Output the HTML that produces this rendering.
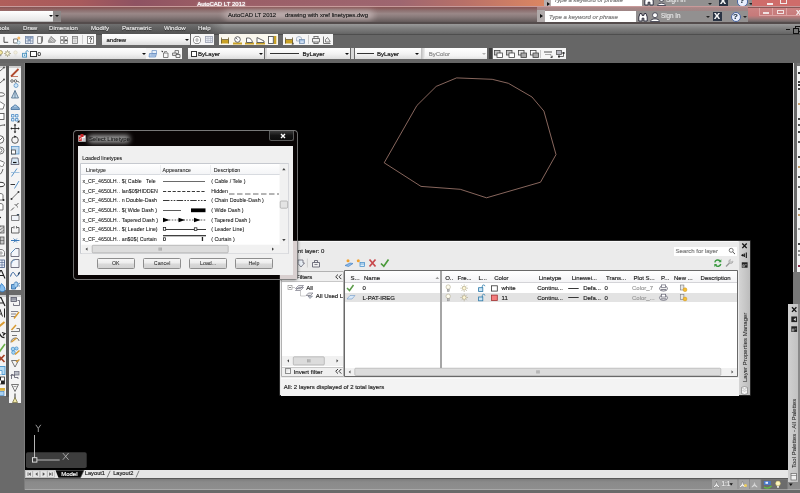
<!DOCTYPE html>
<html><head><meta charset="utf-8"><title>AutoCAD LT 2012</title>
<style>
html,body{margin:0;padding:0;}
body{width:800px;height:493px;overflow:hidden;position:relative;background:#666;font-family:"Liberation Sans",sans-serif;font-size:7px;color:#222;}
.a{position:absolute;}
.t{position:absolute;white-space:nowrap;line-height:1;-webkit-text-stroke:.16px;}
.blur{filter:blur(0.4px);}
#dlg .t{-webkit-text-stroke:.06px;}
#all{position:absolute;left:0;top:0;width:800px;height:493px;overflow:hidden;filter:blur(0.45px);will-change:transform;}
</style></head><body>
<div id="all">
<!-- TITLE -->
<div class="a" style="left:0;top:0;width:800px;height:7px;background:linear-gradient(90deg,#b05e5a 0,#a85a5c 10%,#8e5262 17%,#9a5c64 25%,#9e6670 50%,#b87068 58%,#dc8662 68%);"></div>
<div class="a" style="left:0;top:6.200px;width:800px;height:1px;background:#c89a9a;"></div>
<div class="a" style="left:0;top:7.200px;width:800px;height:15.800px;background:linear-gradient(180deg,#865454 0,#8a5e5e 10%,#8c6e6e 20%,#9a8888 42%,#887a7a 62%,#685e5e 90%,#5a5252 100%);"></div>
<div class="a" style="left:0;top:8px;width:60px;height:15px;background:linear-gradient(90deg,rgba(176,90,86,.35),rgba(176,90,86,0));"></div>
<div class="a" style="left:537px;top:7.200px;width:211px;height:4px;background:linear-gradient(180deg,rgba(205,180,180,.55),rgba(170,150,150,.5));"></div>
<!-- top-row (behind window) -->
<div class="t" style="left:197.200px;top:.8px;font-size:6px;color:#fff;text-shadow:0 0 2px #fff;">AutoCAD LT 2012</div>
<div class="a" style="left:544px;top:0;width:7px;height:6px;background:#b8b0b0;"></div>
<div class="a" style="left:547px;top:2px;border-left:3px solid #111;border-top:2px solid transparent;border-bottom:2px solid transparent;"></div>
<div class="a" style="left:551px;top:0;width:91px;height:6px;background:#fff;overflow:hidden;"><div class="t" style="left:3px;top:-3px;font-size:6px;font-style:italic;color:#777;">Type a keyword or phrase</div></div>
<div class="a" style="left:642px;top:0;width:110px;height:6.300px;background:#929090;overflow:hidden;">
  <div class="t" style="left:24px;top:-3px;font-size:6.3px;color:#e4e4e4;">Sign In</div>
  <svg class="a" style="left:2px;top:-4px" width="10" height="10" viewBox="0 0 10 10"><path d="M.8 9V5L2 1.500h1.600l.6 2h1.600l.6-2H8L9.200 5v4H5.900V6.200H4.100V9z" fill="#fff" stroke="#223" stroke-width=".9"/></svg>
  <svg class="a" style="left:15px;top:-4px" width="9" height="10" viewBox="0 0 9 10"><circle cx="4.5" cy="3" r="2.4" fill="#fff" stroke="#334" stroke-width=".8"/><path d="M.5 9.500c0-3 8-3 8 0z" fill="#fff" stroke="#334" stroke-width=".8"/></svg>
  <div class="a" style="left:77px;top:-3px;width:9px;height:9px;background:#2a3444;"></div><div class="t" style="left:78px;top:-3px;font-size:9px;color:#fff;font-weight:bold;">X</div>
  <div class="a" style="left:95px;top:-4px;width:9px;height:9px;border-radius:5px;background:#e8eefc;border:1px solid #4a66a0;"></div><div class="t" style="left:97.500px;top:-3px;font-size:8px;color:#234;font-weight:bold;">?</div>
  <div class="a" style="left:66px;top:3px;border-top:2px solid #222;border-left:2px solid transparent;border-right:2px solid transparent;"></div>
  <div class="a" style="left:107px;top:3px;border-top:2px solid #222;border-left:2px solid transparent;border-right:2px solid transparent;"></div>
</div>
<div class="a" style="left:752px;top:0;width:48px;height:6.300px;background:#cf6c6a;"></div>
<div class="a" style="left:767px;top:3px;width:6px;height:2px;background:#f4eaea;"></div>
<div class="a" style="left:780px;top:0px;width:5px;height:3px;border:1px solid #f4eaea;border-top:0;"></div>
<!-- main title row -->
<div class="a" style="left:0;top:11px;width:53px;height:11px;background:linear-gradient(180deg,#fff,#e6e6e6);border-bottom:1px solid #bbb;box-sizing:border-box;"></div>
<div class="a" style="left:49px;top:15px;border-top:2.500px solid #111;border-left:2px solid transparent;border-right:2px solid transparent;"></div>
<div class="a" style="left:53px;top:11px;width:8px;height:11px;background:#8c8888;"></div>
<div class="a" style="left:55px;top:15px;border-top:2.500px solid #111;border-left:2px solid transparent;border-right:2px solid transparent;"></div>
<div class="a" style="left:224px;top:11px;width:150px;height:8px;background:#c4b4b4;border-radius:4px;filter:blur(3px);opacity:.95;"></div>
<div class="t" style="left:228px;top:12px;font-size:6px;color:#1c1c1c;">AutoCAD LT 2012</div>
<div class="t" style="left:285px;top:12px;font-size:6px;color:#1c1c1c;">drawing with xref linetypes.dwg</div>
<div class="a" style="left:537px;top:10px;width:8px;height:12px;background:#b0aaaa;"></div>
<div class="a" style="left:540px;top:14px;border-left:3px solid #111;border-top:2.500px solid transparent;border-bottom:2.500px solid transparent;"></div>
<div class="a" style="left:545px;top:11px;width:91px;height:11px;background:#fff;"><div class="t" style="left:4px;top:2.500px;font-size:6px;font-style:italic;color:#777;">Type a keyword or phrase</div></div>
<div class="a" style="left:636px;top:11px;width:112px;height:11px;background:#929090;">
  <svg class="a" style="left:2px;top:1px" width="10" height="10" viewBox="0 0 10 10"><path d="M.8 9V5L2 1.500h1.600l.6 2h1.600l.6-2H8L9.200 5v4H5.900V6.200H4.100V9z" fill="#fff" stroke="#223" stroke-width=".9"/></svg>
  <svg class="a" style="left:14px;top:1px" width="10" height="10" viewBox="0 0 10 10"><circle cx="5" cy="3.200" r="2.500" fill="#fff" stroke="#334" stroke-width=".8"/><path d="M.5 9.500c0-3.500 9-3.500 9 0z" fill="#fff" stroke="#334" stroke-width=".8"/></svg>
  <div class="t" style="left:25px;top:2px;font-size:6.3px;color:#e2e2e2;">Sign In</div>
  <div class="a" style="left:70px;top:5px;border-top:2px solid #222;border-left:2px solid transparent;border-right:2px solid transparent;"></div>
  <div class="a" style="left:77px;top:1px;width:9px;height:9px;background:#2a3444;"></div><div class="t" style="left:78px;top:1px;font-size:9px;color:#fff;font-weight:bold;">X</div>
  <div class="a" style="left:95px;top:1px;width:8px;height:8px;border-radius:5px;background:#e8eefc;border:1px solid #4a66a0;"></div><div class="t" style="left:97px;top:2px;font-size:8px;color:#234;font-weight:bold;">?</div>
  <div class="a" style="left:107px;top:5px;border-top:2px solid #222;border-left:2px solid transparent;border-right:2px solid transparent;"></div>
</div>
<div class="a" style="left:748px;top:8px;width:52px;height:14px;background:linear-gradient(180deg,#cc8282 0,#c67a7a 55%,#a47a7a 72%,#7e6e6e 90%,#6a6060 100%);"></div>
<div class="a" style="left:759px;top:8px;width:14px;height:8px;border:.7px solid #dca4a4;border-top:0;box-sizing:border-box;"></div>
<div class="a" style="left:773px;top:8px;width:14px;height:8px;border:.7px solid #dca4a4;border-top:0;border-left:0;box-sizing:border-box;"></div>
<div class="a" style="left:787px;top:8px;width:14px;height:8px;border:.7px solid #dca4a4;border-top:0;border-left:0;box-sizing:border-box;"></div>
<div class="a" style="left:763px;top:12px;width:6px;height:2px;background:#f0e2e2;"></div>
<div class="a" style="left:777px;top:10px;width:5px;height:2px;border:.8px solid #f0e2e2;border-top-width:1.600px;"></div>
<div class="t" style="left:796px;top:9px;font-size:7px;color:#f6eeee;font-weight:bold;">X</div>
<div class="a" style="left:0;top:22px;width:800px;height:2px;background:#544c4c;"></div>
<!-- MENU BAR -->
<div class="a" id="menubar" style="left:0;top:24px;width:800px;height:10px;background:linear-gradient(180deg,#9a9a9a 0,#7e7e7e 45%,#646464 100%);"></div>
<div class="a" style="left:0;top:24px;width:225px;height:10px;background:linear-gradient(90deg,rgba(60,60,60,.45) 0,rgba(60,60,60,.45) 92%,rgba(60,60,60,0) 100%);"></div>
<div id="menu" style="position:absolute;left:0;top:25px;font-size:6.100px;color:#ececec;text-shadow:0 1px 1px #2a2a2a,0 0 1px #3a3a3a;">
<div class="t" style="left:-2px;">ools</div><div class="t" style="left:23px;">Draw</div><div class="t" style="left:49px;">Dimension</div><div class="t" style="left:91px;">Modify</div><div class="t" style="left:122px;">Parametric</div><div class="t" style="left:164px;">Window</div><div class="t" style="left:198px;">Help</div>
</div>
<div class="a" style="left:786px;top:29px;width:4px;height:1px;background:#111;"></div>
<div class="a" style="left:795px;top:26px;width:5px;height:4px;border:1px solid #111;border-top-width:1.500px;"></div>
<div class="a" style="left:793px;top:28px;width:4px;height:4px;border:1px solid #111;background:#777;"></div>
<!-- TOOLBARS BG -->
<div class="a" style="left:0;top:34px;width:800px;height:29px;background:#666;"></div>
<div class="a" style="left:0;top:33.500px;width:800px;height:1px;background:#4e4e4e;"></div>
<style>
.ws{position:absolute;background:#f6f6f6;}
.dd{position:absolute;background:linear-gradient(180deg,#ffffff 0,#f2f2f2 55%,#dcdcdc 100%);}
.r1{top:34px;height:10.500px;}
.r2{top:48.300px;height:10.400px;}
.tb svg,.lt svg{position:absolute;overflow:visible;}
.lt svg{overflow:hidden;}
</style>
<div class="tb">
<!-- row1 -->
<div class="ws r1" style="left:0;width:96px;"></div>
<div class="dd r1" style="left:102px;width:88px;"></div>
<div class="ws r1" style="left:191px;width:23px;"></div>
<div class="ws r1" style="left:219px;width:59px;background:#faf8ee;"></div>
<div class="ws r1" style="left:283px;width:50px;"></div>
<div class="t" style="left:106.500px;top:36.500px;font-size:6px;color:#111;">andrew</div>
<div class="a" style="left:185px;top:38.5px;border-top:2.500px solid #111;border-left:2px solid transparent;border-right:2px solid transparent;"></div>
<!-- row2 -->
<div class="dd r2" style="left:0;width:146px;"></div>
<div class="ws r2" style="left:146px;width:36px;"></div>
<div class="dd r2" style="left:187.500px;width:76px;"></div>
<div class="a r2" style="left:264.500px;width:2px;background:#d8d8d8;"></div>
<div class="dd r2" style="left:267px;width:83px;"></div>
<div class="a r2" style="left:351px;width:2.500px;background:#d8d8d8;"></div>
<div class="dd r2" style="left:354.500px;width:66px;"></div>
<div class="a r2" style="left:421px;width:4px;background:linear-gradient(90deg,#bbb,#eee);"></div>
<div class="a r2" style="left:425px;width:62px;background:linear-gradient(180deg,#fff,#f4f4f4 70%,#e4e4e4);"></div>
<div class="a r2" style="left:489px;width:3px;background:#3e3e3e;"></div>
<div class="ws r2" style="left:492.500px;width:73px;"></div>
<div class="t" style="left:37.500px;top:50.800px;font-size:6px;color:#111;">0</div>
<div class="a" style="left:30.200px;top:51px;width:4.400px;height:4.200px;border:.7px solid #333;background:#fff;"></div>
<div class="a" style="left:141.5px;top:52.5px;border-top:2.500px solid #111;border-left:2px solid transparent;border-right:2px solid transparent;"></div>
<div class="a" style="left:190.500px;top:51px;width:4.400px;height:4.200px;border:.7px solid #333;background:#fff;"></div>
<div class="t" style="left:198px;top:50.800px;font-size:6px;color:#111;">ByLayer</div>
<div class="a" style="left:258.5px;top:52.5px;border-top:2.500px solid #111;border-left:2px solid transparent;border-right:2px solid transparent;"></div>
<div class="a" style="left:270px;top:53.300px;width:29px;height:1px;background:#333;"></div>
<div class="t" style="left:302.500px;top:50.800px;font-size:6px;color:#111;">ByLayer</div>
<div class="a" style="left:345px;top:52.5px;border-top:2.500px solid #111;border-left:2px solid transparent;border-right:2px solid transparent;"></div>
<div class="a" style="left:356.500px;top:53.300px;width:17.500px;height:1px;background:#333;"></div>
<div class="t" style="left:377px;top:50.800px;font-size:6px;color:#111;">ByLayer</div>
<div class="a" style="left:414.5px;top:52.5px;border-top:2.500px solid #111;border-left:2px solid transparent;border-right:2px solid transparent;"></div>
<div class="t" style="left:428.700px;top:50.800px;font-size:6px;color:#8a8a8a;">ByColor</div>
<div class="a" style="left:481.5px;top:52.5px;border-top:2.500px solid #b0b0b0;border-left:2px solid transparent;border-right:2px solid transparent;"></div>
<!-- TBICONS -->
<svg style="left:2.5px;top:36px" width="6" height="8" viewBox="0 0 6 8"><path d="M1 .8V6.300H5.200" fill="none" stroke="#222" stroke-width=".8"/></svg>
<svg style="left:13px;top:35.5px" width="9" height="9" viewBox="0 0 9 9"><path d="M.6 3h4v4h-4z" fill="#fff" stroke="#555" stroke-width=".8"/><circle cx="5.800" cy="2" r="1.500" fill="#f4b868"/><circle cx="5.600" cy="6.600" r="1.500" fill="#e8f4fa" stroke="#78a8c0" stroke-width=".6"/></svg>
<svg style="left:24.5px;top:36px" width="8" height="8" viewBox="0 0 8 8"><rect x=".5" y=".5" width="7.500" height="7" fill="#e2eaf4" stroke="#6a7a96" stroke-width=".8"/><rect x=".5" y=".5" width="7.500" height="2.200" fill="#8ea4c4"/><path d="M3 .5v7M5.500 .5v7M.5 5h7.500" stroke="#7a8aa6" stroke-width=".6"/><rect x="3.200" y="3.200" width="2.200" height="1.600" fill="#7088b0"/></svg>
<svg style="left:37px;top:35.8px" width="7" height="8" viewBox="0 0 7 8"><path d="M.6 .6h3.800v6.800H.6z" fill="#fff" stroke="#6a6a6a" stroke-width=".8"/><path d="M5.300 .3v5l-.6 1.500" stroke="#555" stroke-width="1" fill="none"/></svg>
<svg style="left:48px;top:36px" width="8" height="7" viewBox="0 0 8 7"><path d="M3 .3L7.800 4.500 6.500 6.500H.5L.3 5z" fill="#a4a4a4" stroke="#6e6e6e" stroke-width=".5"/><path d="M1.500 3l4 3M2.500 1.800l4 3.200" stroke="#f4f4f4" stroke-width=".6"/></svg>
<svg style="left:60px;top:36px" width="8" height="8" viewBox="0 0 8 8"><path d="M.5 .5h3v3h-3zM4.500 .5h2l1 1v2h-3zM.5 4.500h3v3h-3zM4.500 4.500h3v3h-3z" fill="#f8f8f8" stroke="#777" stroke-width=".7"/><rect x="4.500" y="4" width="3" height="1.200" fill="#555"/><rect x=".5" y="4" width="3" height=".8" fill="#888"/></svg>
<svg style="left:72px;top:36px" width="6" height="8" viewBox="0 0 6 8"><rect x=".5" y=".5" width="5" height="7" fill="#ececec" stroke="#7a7a7a" stroke-width=".8"/><path d="M.5 2.200h5" stroke="#7a7a7a" stroke-width=".7"/><rect x="1.500" y="3.500" width="3" height="3" fill="#d0d0d0"/></svg>
<svg style="left:82.2px;top:35px" width="1" height="9" viewBox="0 0 1 9"><rect width="1" height="9" fill="#d0d0d0"/></svg>
<svg style="left:86.8px;top:36px" width="7" height="8" viewBox="0 0 7 8"><rect x=".5" y=".5" width="6" height="7" fill="#fff" stroke="#777" stroke-width=".8"/><path d="M2.600 2.600c0-1.200 2-1.200 2 0 0 .9-1 .9-1 1.900" fill="none" stroke="#111" stroke-width=".9"/><rect x="3.100" y="5.300" width="1" height="1" fill="#111"/></svg>
<svg style="left:192.5px;top:35.8px" width="8" height="8" viewBox="0 0 8 8"><path d="M2 .5h4l1.500 2v3L6 7.500H2L.5 5.500v-3z" fill="#fafafa" stroke="#777" stroke-width=".8"/><ellipse cx="4" cy="4" rx="1" ry="1.500" fill="#fff" stroke="#555" stroke-width=".5"/></svg>
<svg style="left:204.5px;top:36.3px" width="8" height="7" viewBox="0 0 8 7"><rect x=".5" y=".5" width="7" height="6" fill="#e6eaf2" stroke="#9aa0b0" stroke-width=".8"/><path d="M.5 2.500h7M.5 4.500h7M3 .5v6M5.500 .5v6" stroke="#a4aaba" stroke-width=".5"/></svg>
<svg style="left:221px;top:36.5px" width="8" height="7" viewBox="0 0 8 7"><rect x="0" y="2.800" width="8" height="3.700" fill="#c9a227"/><path d="M.5 .5v6M7.500 .5v6M.5 2.500h7" stroke="#6a5a30" stroke-width=".8" fill="none"/></svg>
<svg style="left:232.5px;top:35.5px" width="9" height="9" viewBox="0 0 9 9"><rect x="0" y="6.500" width="9" height="2" fill="#c9a227"/><circle cx="4.500" cy="3.500" r="2.800" fill="#fff" stroke="#555" stroke-width=".9"/><path d="M4.500 3.500L3 2" stroke="#333" stroke-width=".7"/></svg>
<svg style="left:244.5px;top:35.5px" width="9" height="9" viewBox="0 0 9 9"><rect x="0" y="6.500" width="9" height="2" fill="#c9a227"/><path d="M1.500 6.500V2h2c2 0 3.500 2 4 4.500z" fill="#fff" stroke="#555" stroke-width=".9"/></svg>
<svg style="left:256px;top:35.5px" width="9" height="9" viewBox="0 0 9 9"><rect x="0" y="6.500" width="9" height="2" fill="#c9a227"/><path d="M1 6.500V1.500L8 5v1.500z" fill="#fff" stroke="#555" stroke-width=".9"/></svg>
<svg style="left:268px;top:35.8px" width="9" height="8" viewBox="0 0 9 8"><rect x="5.500" y="0" width="2.800" height="8" fill="#c9a227"/><rect x=".5" y=".5" width="4.800" height="7" fill="#fff" stroke="#555" stroke-width=".9"/></svg>
<svg style="left:285px;top:36.5px" width="9" height="8" viewBox="0 0 9 8"><rect x="0" y="2.800" width="8" height="3.700" fill="#c9a227"/><path d="M.5 .5v6M7.500 .5v6M.5 2.500h7" stroke="#6a5a30" stroke-width=".8" fill="none"/><path d="M8.500 5.500v2h-2z" fill="#111"/></svg>
<svg style="left:296px;top:36px" width="9" height="8" viewBox="0 0 9 8"><path d="M.5 2.500c0-2.500 5-2.500 5 0v2.500h-5z" fill="#eef2f8" stroke="#8a9cb4" stroke-width=".7"/><rect x="3.500" y="3.500" width="5" height="4" fill="#a4c0e0" stroke="#6a86a8" stroke-width=".7"/><rect x="4.500" y="5.500" width="3" height="1.200" fill="#e8f0fa"/></svg>
<svg style="left:308.2px;top:35px" width="1" height="9" viewBox="0 0 1 9"><rect width="1" height="9" fill="#c8c8c8"/></svg>
<svg style="left:311.8px;top:36px" width="8" height="8" viewBox="0 0 8 8"><path d="M1.500 .5h5M1.500 7.500h5M.5 2.500h7v3.500h-7z" fill="#f0f0f0" stroke="#666" stroke-width=".9"/><path d="M2 2.500v-2M6 2.500v-2M2 7.500v-1.500M6 7.500v-1.500" stroke="#666" stroke-width=".8"/></svg>
<svg style="left:323px;top:36px" width="8" height="8" viewBox="0 0 8 8"><path d="M.5 .5v7h7" fill="none" stroke="#666" stroke-width=".9"/><path d="M2.500 6V3.500L4.500 1.500 7 5v1z" fill="#f0f0f0" stroke="#666" stroke-width=".8"/></svg>
<svg style="left:-1.5px;top:50px" width="4" height="7" viewBox="0 0 4 7"><circle cx="1.500" cy="2.500" r="2" fill="#f4e8a0" stroke="#8a7a40" stroke-width=".6"/><rect x=".7" y="4.600" width="1.600" height="1.600" fill="#999"/></svg>
<svg style="left:4px;top:49.5px" width="7" height="7" viewBox="0 0 7 7"><circle cx="3.500" cy="3.500" r="1.900" fill="#faf6d8" stroke="#7a7450" stroke-width=".6"/><path d="M3.500 0v1M3.500 6v1M0 3.500h1M6 3.500h1M1 1l.7 .7M5.300 5.300l.7 .7M6 1l-.7 .7M1.700 5.300L1 6" stroke="#8a8460" stroke-width=".6"/></svg>
<svg style="left:13px;top:49.5px" width="5" height="8" viewBox="0 0 5 8"><circle cx="2.500" cy="2.500" r="1.700" fill="#f4f0e0" stroke="#d8d4c0" stroke-width=".6"/><rect x="1.500" y="4.500" width="2" height="2.500" fill="#e4e4e4"/></svg>
<svg style="left:22px;top:49.5px" width="7" height="8" viewBox="0 0 7 8"><rect x=".6" y="3.300" width="4" height="3.800" fill="#dceef8" stroke="#3a88b8" stroke-width=".8"/><path d="M4 3.300V1.800c0-1.600 2.400-1.600 2.400 0" fill="none" stroke="#3a88b8" stroke-width=".8"/><path d="M2.600 4.500v1.500" stroke="#2a78a8" stroke-width=".8"/></svg>
<svg style="left:148.5px;top:50px" width="9" height="8" viewBox="0 0 9 8"><path d="M3 .5h4.500v3H3z" fill="#e8f0fa" stroke="#6a90c4" stroke-width=".7"/><path d="M.5 3.500h7l-1 3.500h-6.500z" fill="#c4d8f0" stroke="#5a84bc" stroke-width=".7"/><path d="M1.500 5h5" stroke="#5a84bc" stroke-width=".6"/></svg>
<svg style="left:160.5px;top:50px" width="8" height="8" viewBox="0 0 8 8"><path d="M.3 .8l1.800 .2-.9 1.400z" fill="#111"/><path d="M2.500 3h4.500v4.500H2.500z" fill="#f6f6f6" stroke="#666" stroke-width=".8"/><path d="M3.500 3V1.500H6" fill="none" stroke="#666" stroke-width=".7"/></svg>
<svg style="left:172px;top:50px" width="9" height="8" viewBox="0 0 9 8"><path d="M3 .5h3.500v3H3z" fill="#eee" stroke="#666" stroke-width=".8"/><path d="M.5 3h4v2.500h-4z" fill="#ddd" stroke="#666" stroke-width=".8"/><path d="M4 4.500h4v3H4z" fill="#f4f4f4" stroke="#555" stroke-width=".8"/></svg>
<svg style="left:494px;top:50px" width="9" height="8" viewBox="0 0 9 8"><rect x=".5" y=".5" width="5.500" height="4.500" fill="#c8c8c8" stroke="#444" stroke-width=".8"/><rect x="3" y="3" width="5.500" height="4.500" fill="#fff" stroke="#444" stroke-width=".8"/></svg>
<svg style="left:506px;top:50px" width="9" height="8" viewBox="0 0 9 8"><rect x=".5" y=".5" width="5.500" height="4.500" fill="#c8c8c8" stroke="#444" stroke-width=".8"/><rect x="3" y="3" width="5.500" height="4.500" fill="#fff" stroke="#444" stroke-width=".8"/></svg>
<svg style="left:517.5px;top:50px" width="9" height="8" viewBox="0 0 9 8"><rect x=".5" y=".5" width="5.500" height="4.500" fill="#eee" stroke="#444" stroke-width=".8"/><rect x="3" y="3" width="5.500" height="4.500" fill="#aaa" stroke="#444" stroke-width=".8"/></svg>
<svg style="left:529.5px;top:50px" width="9" height="8" viewBox="0 0 9 8"><rect x=".5" y=".5" width="5.500" height="4.500" fill="#fff" stroke="#444" stroke-width=".8"/><rect x="3" y="3" width="5.500" height="4.500" fill="#aaa" stroke="#444" stroke-width=".8"/></svg>
<svg style="left:540.2px;top:49.5px" width="1" height="8" viewBox="0 0 1 8"><rect width="1" height="8" fill="#c8c8c8"/></svg>
<svg style="left:544px;top:50px" width="9" height="8" viewBox="0 0 9 8"><path d="M.5 2h1M2.500 2h1M4.500 2h1M6.500 2h1" stroke="#222" stroke-width="1.400"/><path d="M1 4.500h6v2" fill="none" stroke="#888" stroke-width=".7"/><path d="M8.500 5.500v2.300h-2.300z" fill="#111"/></svg>
<svg style="left:556px;top:50px" width="9" height="8" viewBox="0 0 9 8"><rect x=".5" y=".5" width="5" height="4" fill="#b8b8c0" stroke="#555" stroke-width=".8"/><path d="M3 6.500h4.500V3" fill="none" stroke="#444" stroke-width=".8"/><rect x="6.500" y="2" width="2" height="2" fill="#333"/><rect x="2" y="5.500" width="2" height="2" fill="#333"/></svg>
<!-- /TBICONS -->
</div>
<!-- DRAWING AREA -->
<div class="a" id="draw" style="left:24px;top:62.500px;width:768.500px;height:408px;background:#000;"></div>
<svg class="a" style="left:0;top:0" width="800" height="493" viewBox="0 0 800 493">
<polygon points="456.600,77.900 492.200,79.300 508.400,83.300 532,97 543.900,111.100 556,154.600 540.500,182.200 486.500,197.800 460.300,189.300 421,186.400 384.200,162.800 416.900,105.500 436.200,86.400" fill="none" stroke="#b4887c" stroke-width=".75"/>
<rect x="26" y="452.200" width="60.700" height="15.800" rx="1.800" fill="#3d3d3d"/>
<path d="M34.500 435V457.500" stroke="#c8c8c8" stroke-width=".9"/>
<path d="M37.200 460H59.700" stroke="#c8c8c8" stroke-width=".9"/>
<rect x="32.500" y="457.700" width="4.400" height="4.400" fill="none" stroke="#e8e8e8" stroke-width=".9"/>
<path d="M35.800 424.800L38.300 428.300L40.800 424.800M38.300 428.300V432" fill="none" stroke="#bdbdbd" stroke-width=".8"/>
<path d="M62.800 453L68.600 459.800M68.600 453L62.800 459.800" fill="none" stroke="#bdbdbd" stroke-width=".8"/>
</svg>
<div class="a" style="left:0;top:63px;width:24px;height:430px;background:#6a6a6a;"></div>
<!-- LEFTTB -->
<div class="lt">
<div class="a" style="left:6px;top:66.300px;width:3px;height:331px;background:#595959;"></div>
<div class="a" style="left:0;top:66.300px;width:6px;height:224px;background:#f4f4f4;"></div>
<div class="a" style="left:0;top:295.300px;width:6px;height:101px;background:#f4f4f4;"></div>
<div class="a" style="left:9px;top:66.300px;width:12px;height:224px;background:#f4f4f4;"></div>
<div class="a" style="left:9px;top:295.300px;width:12px;height:107.500px;background:#f4f4f4;"></div>
<div class="a" style="left:0px;top:66.3px;width:6px;height:1.500px;background:#cfcfcf;"></div>
<div class="a" style="left:0px;top:295.3px;width:6px;height:1.500px;background:#cfcfcf;"></div>
<div class="a" style="left:9px;top:66.3px;width:12px;height:1.500px;background:#cfcfcf;"></div>
<div class="a" style="left:9px;top:295.3px;width:12px;height:1.500px;background:#cfcfcf;"></div>
<svg style="left:9px;top:66.5px" width="12" height="11" viewBox="0 0 12 11"><path d="M2 9.500L9.500 2" stroke="#b04a30" stroke-width="1.800"/><path d="M2 9.500h7" stroke="#b04a30" stroke-width=".7"/></svg>
<svg style="left:9px;top:77.5px" width="12" height="11" viewBox="0 0 12 11"><circle cx="3" cy="3" r="1.300" fill="none" stroke="#333" stroke-width=".7"/><circle cx="6.500" cy="3" r="1.300" fill="none" stroke="#333" stroke-width=".7"/><circle cx="7" cy="7.500" r="2" fill="#d4e8f8" stroke="#5a94c8" stroke-width=".8"/><path d="M8.500 3l1.500 1.500" stroke="#111" stroke-width=".9"/></svg>
<svg style="left:9px;top:88.5px" width="12" height="11" viewBox="0 0 12 11"><path d="M6 1.500L2.500 9h7z" fill="#c8dcec" stroke="#4a6a88" stroke-width=".8"/><path d="M6 1.500V9" stroke="#4a6a88" stroke-width=".7"/></svg>
<svg style="left:9px;top:100.0px" width="12" height="11" viewBox="0 0 12 11"><path d="M2 9.500h8.500c0-2-1.500-3-2.500-3 0-2-3.500-2-3.500 0-1.500 0-2.500 1-2.500 3z" fill="#a8c8e4" stroke="#3a6a98" stroke-width=".8"/><path d="M2 8h8" stroke="#3a6a98" stroke-width=".6"/></svg>
<svg style="left:9px;top:111.5px" width="12" height="11" viewBox="0 0 12 11"><path d="M2.500 2.500h2.500v2.500h-2.500zM6.500 2.500h2.500v2.500h-2.500zM2.500 6.500h2.500v2.500h-2.500zM6.500 6.500h2.500v2.500h-2.500z" fill="#e0eefa" stroke="#5a94c8" stroke-width=".9"/><path d="M10.500 8v2.500h-2.500z" fill="#111"/></svg>
<svg style="left:9px;top:122.5px" width="12" height="11" viewBox="0 0 12 11"><path d="M6 1.500v8M2 5.500h8" stroke="#222" stroke-width=".9"/><path d="M6 .8l1.300 1.700h-2.600zM6 10.200l1.300-1.700h-2.600zM1.300 5.500l1.700-1.300v2.600zM10.700 5.500l-1.700-1.300v2.600z" fill="#222"/></svg>
<svg style="left:9px;top:134.0px" width="12" height="11" viewBox="0 0 12 11"><circle cx="6" cy="6" r="3.300" fill="none" stroke="#333" stroke-width=".8"/><path d="M5 1.500l2.500 1-2 1.500z" fill="#222"/></svg>
<svg style="left:9px;top:145.0px" width="12" height="11" viewBox="0 0 12 11"><rect x="2.500" y="1.500" width="7.500" height="7.500" fill="#c4dcf0" stroke="#5a94c8" stroke-width=".8"/><rect x="2.500" y="5" width="4" height="4" fill="#fff" stroke="#444" stroke-width=".8"/></svg>
<svg style="left:9px;top:156.0px" width="12" height="11" viewBox="0 0 12 11"><path d="M3 2h6l1 6.500h-8z" fill="#d8e8f4" stroke="#556" stroke-width=".8"/><path d="M4 6.500h3.500" stroke="#111" stroke-width="1.200"/></svg>
<svg style="left:9px;top:167.0px" width="12" height="11" viewBox="0 0 12 11"><path d="M2.500 9.500L8 1.500" stroke="#5a94c8" stroke-width="1"/><path d="M2 5.500h8.500" stroke="#8ab4d8" stroke-width=".8"/></svg>
<svg style="left:9px;top:178.5px" width="12" height="11" viewBox="0 0 12 11"><path d="M5.500 9.500L10 2" stroke="#5a94c8" stroke-width="1"/><path d="M1.500 5.500h4.500" stroke="#222" stroke-width=".9"/></svg>
<svg style="left:9px;top:190.0px" width="12" height="11" viewBox="0 0 12 11"><path d="M2.500 9L9.500 2" stroke="#444" stroke-width=".8"/><circle cx="2.500" cy="9" r="1" fill="#333"/><circle cx="9.500" cy="2" r="1" fill="#333"/></svg>
<svg style="left:9px;top:201.0px" width="12" height="11" viewBox="0 0 12 11"><path d="M2 9.500L5 6.500M7 4.500L9.500 2" stroke="#444" stroke-width=".9"/><path d="M5.500 3.500c1.500 0 3 1.500 3 3" fill="none" stroke="#444" stroke-width=".7"/></svg>
<svg style="left:9px;top:211.5px" width="12" height="11" viewBox="0 0 12 11"><path d="M2.500 8.500h7.500V3.500H2.500z" fill="#f0f4fa" stroke="#666" stroke-width=".8"/><path d="M7.500 2h3l-1.500 2z" fill="#345"/></svg>
<svg style="left:9px;top:223.5px" width="12" height="11" viewBox="0 0 12 11"><path d="M2.500 3.500v5.500h7.500V3.500M2.500 3.500h2M8 3.500h2" fill="none" stroke="#555" stroke-width=".9"/><path d="M5 2v2.500M7.500 2v2.500" stroke="#555" stroke-width=".8"/></svg>
<svg style="left:9px;top:235.0px" width="12" height="11" viewBox="0 0 12 11"><path d="M2 5.500h8.500" stroke="#3a78b8" stroke-width="1"/><path d="M4.500 3.500l2 2-2 2M8 3.500l-2 2 2 2" fill="none" stroke="#3a78b8" stroke-width=".8"/></svg>
<svg style="left:9px;top:246.5px" width="12" height="11" viewBox="0 0 12 11"><path d="M2 9.500V6L6.500 1.500h3.500v8z" fill="#f4f6fa" stroke="#556" stroke-width=".8"/><path d="M2 6l4.500-4.500" stroke="#5a94c8" stroke-width=".8"/></svg>
<svg style="left:9px;top:257.5px" width="12" height="11" viewBox="0 0 12 11"><path d="M2 9.500V5c0-2 2-3.500 4-3.500h4v8z" fill="#f4f6fa" stroke="#556" stroke-width=".8"/><path d="M2.500 5.500C3 3 4.500 2 6 1.800" fill="none" stroke="#5a94c8" stroke-width=".8"/></svg>
<svg style="left:9px;top:268.5px" width="12" height="11" viewBox="0 0 12 11"><path d="M1.500 7.500c1.500-5 3-5 4.500-2s3 2 4.500-2.500" fill="none" stroke="#2a5a98" stroke-width="1"/><path d="M10.500 2.500v2.800h-2z" fill="#234"/></svg>
<svg style="left:9px;top:280.0px" width="12" height="11" viewBox="0 0 12 11"><path d="M2.500 4.500h4v4.500h-4z" fill="#7ab0e0" stroke="#2a6aa8" stroke-width=".8"/><path d="M5 3.500c1-2 3.500-2 4 0s-1 4-2.500 4" fill="#a8d0f0" stroke="#2a6aa8" stroke-width=".8"/><path d="M9.500 4l1.500-1M9.500 6h1.500" stroke="#2a6aa8" stroke-width=".7"/></svg>
<svg style="left:9px;top:295.5px" width="12" height="11" viewBox="0 0 12 11"><rect x="2" y="1.500" width="5.500" height="4" fill="#b0b4bc" stroke="#556" stroke-width=".8"/><path d="M4.500 7.500v2h6V4.500h-2" fill="none" stroke="#556" stroke-width=".8"/><path d="M2 3h5.500" stroke="#667" stroke-width=".6"/></svg>
<svg style="left:9px;top:308.5px" width="12" height="11" viewBox="0 0 12 11"><path d="M2 2.500h7M2 5h5M2 7.500h4" stroke="#667" stroke-width=".8"/><path d="M5 9.500L10 3" stroke="#d89a30" stroke-width="1.400"/></svg>
<svg style="left:9px;top:321.5px" width="12" height="11" viewBox="0 0 12 11"><path d="M2 9.500h8.500V6.500h-3" fill="#f4f4f4" stroke="#555" stroke-width=".8"/><path d="M2.500 8L7 3" stroke="#d89a30" stroke-width="1.500"/></svg>
<svg style="left:9px;top:333.0px" width="12" height="11" viewBox="0 0 12 11"><path d="M3 2.500h5" stroke="#555" stroke-width=".8"/><path d="M2 9.500c0-3 2-4.500 4.500-4.500 2 0 3.500 1.500 3.500 3" fill="#f4f0e4" stroke="#555" stroke-width=".8"/><path d="M2.500 9L7.500 5" stroke="#d89a30" stroke-width="1.500"/></svg>
<svg style="left:9px;top:345.0px" width="12" height="11" viewBox="0 0 12 11"><circle cx="4" cy="4" r="1.800" fill="#a8d4f0" stroke="#3a88c8" stroke-width=".7"/><circle cx="7.500" cy="3.500" r="1.600" fill="#a8d4f0" stroke="#3a88c8" stroke-width=".7"/><circle cx="4.500" cy="7.500" r="1.800" fill="#a8d4f0" stroke="#3a88c8" stroke-width=".7"/><path d="M6 9.500L10.500 5.500" stroke="#d89a30" stroke-width="1.500"/></svg>
<svg style="left:9px;top:358.0px" width="12" height="11" viewBox="0 0 12 11"><path d="M2.500 2.500h7l-3.500 6.500z" fill="#f4f4f4" stroke="#555" stroke-width=".8"/><path d="M7 4L10.500 1.500" stroke="#d89a30" stroke-width="1.400"/></svg>
<svg style="left:9px;top:370.0px" width="12" height="11" viewBox="0 0 12 11"><rect x="5.500" y="1.500" width="4.500" height="3.500" fill="#b8bcc4" stroke="#667" stroke-width=".7"/><path d="M2.500 9V5h3v2.500h3.500v1.500" fill="none" stroke="#556" stroke-width=".8"/><path d="M1.500 6l1.500-2 1.500 2" fill="none" stroke="#556" stroke-width=".7"/></svg>
<svg style="left:9px;top:382.0px" width="12" height="11" viewBox="0 0 12 11"><path d="M2.500 2.500h7l-3.500 7z" fill="#f4f4f4" stroke="#555" stroke-width=".8"/><path d="M4.500 4.500h3" stroke="#777" stroke-width=".7"/></svg>
<svg style="left:9px;top:392.5px" width="12" height="11" viewBox="0 0 12 11"><path d="M6 .5v5" stroke="#333" stroke-width="1"/><path d="M6 4.500L3.500 9.500h5z" fill="#f0e8a8" stroke="#777040" stroke-width=".8"/></svg>
<svg style="left:0px;top:65.0px" width="6" height="11" viewBox="0 0 6 11"><g transform="translate(-6 0)"><path d="M2 9.500L10 2.500" stroke="#444" stroke-width=".8"/><circle cx="10" cy="2.500" r=".9" fill="#444"/></g></svg>
<svg style="left:0px;top:76.5px" width="6" height="11" viewBox="0 0 6 11"><g transform="translate(-6 0)"><path d="M2 9.500L10 2.500" stroke="#444" stroke-width=".8"/><circle cx="10" cy="2.500" r=".9" fill="#444"/></g></svg>
<svg style="left:0px;top:88.5px" width="6" height="11" viewBox="0 0 6 11"><g transform="translate(-6 0)"><ellipse cx="7" cy="5.500" rx="3.500" ry="1.800" fill="#fff" stroke="#444" stroke-width=".8"/></g></svg>
<svg style="left:0px;top:99.5px" width="6" height="11" viewBox="0 0 6 11"><g transform="translate(-6 0)"><path d="M2 4.500L6.500 2l4 2.500L9 9H4z" fill="#fff" stroke="#555" stroke-width=".8"/></g></svg>
<svg style="left:0px;top:110.5px" width="6" height="11" viewBox="0 0 6 11"><g transform="translate(-6 0)"><rect x="2" y="2.500" width="8" height="6" fill="#fff" stroke="#444" stroke-width=".8"/></g></svg>
<svg style="left:0px;top:120.5px" width="6" height="11" viewBox="0 0 6 11"><g transform="translate(-6 0)"><path d="M2 8c2-3 5-4 8.500-4" fill="none" stroke="#444" stroke-width=".8"/><circle cx="10.500" cy="4" r=".7" fill="#444"/></g></svg>
<svg style="left:0px;top:133.5px" width="6" height="11" viewBox="0 0 6 11"><g transform="translate(-6 0)"><circle cx="6" cy="5.500" r="3.800" fill="#fff" stroke="#444" stroke-width=".8"/><path d="M4 8L8.500 3.500" stroke="#444" stroke-width=".8"/></g></svg>
<svg style="left:0px;top:145.0px" width="6" height="11" viewBox="0 0 6 11"><g transform="translate(-6 0)"><ellipse cx="6" cy="5.500" rx="4" ry="3.500" fill="#fff" stroke="#555" stroke-width=".8"/><ellipse cx="6" cy="5.500" rx="2" ry="1.800" fill="none" stroke="#555" stroke-width=".7"/></g></svg>
<svg style="left:0px;top:156.5px" width="6" height="11" viewBox="0 0 6 11"><g transform="translate(-6 0)"><path d="M3 8.500c-2-1 0-3 1-3 0-2 3-2.500 4-1 2-.5 3 2 1.500 3 .5 2-2 2.500-3 1.500z" fill="#fff" stroke="#555" stroke-width=".8"/></g></svg>
<svg style="left:0px;top:166.5px" width="6" height="11" viewBox="0 0 6 11"><g transform="translate(-6 0)"><path d="M2 3c2 6 5 6 7-1" fill="none" stroke="#444" stroke-width=".8"/></g></svg>
<svg style="left:0px;top:179.0px" width="6" height="11" viewBox="0 0 6 11"><g transform="translate(-6 0)"><ellipse cx="6" cy="5.500" rx="4.500" ry="2.200" fill="#fff" stroke="#333" stroke-width="1"/></g></svg>
<svg style="left:0px;top:190.5px" width="6" height="11" viewBox="0 0 6 11"><g transform="translate(-6 0)"><path d="M3 9V4c0-2 6-2 6 0v5z" fill="#fff" stroke="#555" stroke-width=".8"/><circle cx="9.500" cy="9" r="1" fill="#222"/></g></svg>
<svg style="left:0px;top:201.0px" width="6" height="11" viewBox="0 0 6 11"><g transform="translate(-6 0)"><path d="M3 9V4c0-2 6-2 6 0v5z" fill="#fff" stroke="#555" stroke-width=".8"/></g></svg>
<svg style="left:0px;top:212.0px" width="6" height="11" viewBox="0 0 6 11"><g transform="translate(-6 0)"><circle cx="6.300" cy="5.500" r=".8" fill="#222"/></g></svg>
<svg style="left:0px;top:223.5px" width="6" height="11" viewBox="0 0 6 11"><g transform="translate(-6 0)"><rect x="3" y="2" width="7" height="7" fill="#d8d8d8" stroke="#555" stroke-width=".8"/><path d="M3 5l4-3M3 8l7-5M6 9l4-3" stroke="#555" stroke-width=".6"/></g></svg>
<svg style="left:0px;top:235.0px" width="6" height="11" viewBox="0 0 6 11"><g transform="translate(-6 0)"><rect x="3" y="2" width="7" height="7" fill="#c8c8c8" stroke="#555" stroke-width=".8"/><path d="M3 5.500h7M6.500 2v7" stroke="#555" stroke-width=".6"/></g></svg>
<svg style="left:0px;top:246.5px" width="6" height="11" viewBox="0 0 6 11"><g transform="translate(-6 0)"><path d="M3 9V5.500c0-2 2-3 4-3 2 0 3.500 1.500 3.500 3V9z" fill="#fff" stroke="#555" stroke-width=".8"/><circle cx="7" cy="6" r="1.200" fill="none" stroke="#555" stroke-width=".6"/></g></svg>
<svg style="left:0px;top:257.5px" width="6" height="11" viewBox="0 0 6 11"><g transform="translate(-6 0)"><rect x="2.500" y="2" width="8" height="7.500" fill="#eaf0f8" stroke="#4a6088" stroke-width=".8"/><path d="M2.500 4.500h8M2.500 7h8M5.500 2v7.500M8 2v7.500" stroke="#4a6088" stroke-width=".6"/></g></svg>
<svg style="left:0px;top:269.0px" width="6" height="11" viewBox="0 0 6 11"><g transform="translate(-6 0)"><path d="M3 9.500L6.500 1.500h1L11 9.500M4.500 6.500h5" fill="none" stroke="#222" stroke-width="1.100"/></g></svg>
<svg style="left:0px;top:281.5px" width="6" height="11" viewBox="0 0 6 11"><g transform="translate(-6 0)"><path d="M7.500 1.500c2 2 3.500 4 3.500 6 0 3-5.500 3-5.500 0 0-2 1-4 2-6z" fill="#88c0f0" stroke="#2a78c8" stroke-width=".8"/></g></svg>
<svg style="left:0px;top:296.0px" width="6" height="11" viewBox="0 0 6 11"><g transform="translate(-6 0)"><path d="M2 10L6 1.500h1L11 10M4 7h5" fill="none" stroke="#222" stroke-width="1.200"/></g></svg>
<svg style="left:0px;top:307.0px" width="6" height="11" viewBox="0 0 6 11"><g transform="translate(-6 0)"><path d="M2 9.500L5 2h.8L8.500 9.500M3.500 7h3.500" fill="none" stroke="#222" stroke-width="1"/><path d="M10.500 1.500v9" stroke="#222" stroke-width="1"/></g></svg>
<svg style="left:0px;top:318.5px" width="6" height="11" viewBox="0 0 6 11"><g transform="translate(-6 0)"><path d="M4 8.500L10.500 3" stroke="#d89a30" stroke-width="2"/><path d="M3 9.500l2-.5" stroke="#333" stroke-width="1"/></g></svg>
<svg style="left:0px;top:330.0px" width="6" height="11" viewBox="0 0 6 11"><g transform="translate(-6 0)"><path d="M5.500 3.500c2 4 3 4 5 4M8 2.500l3 1-2 2" fill="none" stroke="#222" stroke-width="1.300"/></g></svg>
<svg style="left:0px;top:342.0px" width="6" height="11" viewBox="0 0 6 11"><g transform="translate(-6 0)"><path d="M3 6l3 3 5-7" fill="none" stroke="#6ab04a" stroke-width="1.600"/></g></svg>
<svg style="left:0px;top:352.5px" width="6" height="11" viewBox="0 0 6 11"><g transform="translate(-6 0)"><path d="M4 2l6.500 7M10.500 2L4 9" stroke="#a8452a" stroke-width="1.700"/></g></svg>
<svg style="left:0px;top:364.5px" width="6" height="11" viewBox="0 0 6 11"><g transform="translate(-6 0)"><rect x="2" y="1.500" width="9" height="8" fill="#b8dcf4" stroke="#4a98d0" stroke-width=".9"/><path d="M4 9.500V5.500h4v4" fill="#fff" stroke="#4a98d0" stroke-width=".8"/></g></svg>
<svg style="left:0px;top:375.0px" width="6" height="11" viewBox="0 0 6 11"><g transform="translate(-6 0)"><rect x="3.500" y="2" width="7" height="7" fill="#fff" stroke="#333" stroke-width=".8"/><path d="M3.500 2h3.500v3.500h-3.500zM7 5.500h3.500v3.500H7z" fill="#222"/></g></svg>
<svg style="left:0px;top:385.5px" width="6" height="11" viewBox="0 0 6 11"><g transform="translate(-6 0)"><rect x="3" y="2" width="8" height="2.800" fill="#d8b040"/><rect x="5" y="5.500" width="5" height="4" fill="#a8d0f0" stroke="#4a88c0" stroke-width=".7"/></g></svg>
</div>
<!-- /LEFTTB -->
<!-- bottom -->
<div class="a" style="left:23.500px;top:62.500px;width:1px;height:428px;background:#7c7c7c;"></div>
<div class="a" style="left:24.500px;top:470.200px;width:763px;height:7.500px;background:#e6e6e6;"></div>
<div class="a" style="left:24.500px;top:477.700px;width:776px;height:1.500px;background:#585858;"></div>
<div class="a" style="left:24.500px;top:479.200px;width:776px;height:10.300px;background:linear-gradient(180deg,#7c7c7c 0,#8a8a8a 30%,#8e8e8e 100%);"></div>
<div class="a" style="left:24.500px;top:489.300px;width:776px;height:1px;background:#a8a8a8;"></div>
<div class="a" style="left:0;top:490.300px;width:800px;height:3px;background:#6a6a6a;"></div>
<svg class="a" style="left:0;top:0" width="800" height="493" viewBox="0 0 800 493">
<g fill="none" stroke="#b0b0b0" stroke-width=".6"><rect x="25.500" y="470.800" width="7" height="6.500"/><rect x="32.800" y="470.800" width="7" height="6.500"/><rect x="40.100" y="470.800" width="7" height="6.500"/><rect x="47.400" y="470.800" width="7" height="6.500"/></g>
<g fill="#555"><path d="M30.800 472.300v3.600l-2.300-1.800z"/><rect x="27.600" y="472.300" width=".8" height="3.600"/><path d="M37.600 472.300v3.600l-2.300-1.800z"/><path d="M42.700 472.300v3.600l2.300-1.800z"/><path d="M49.200 472.300v3.600l2.300-1.800z"/><rect x="51.800" y="472.300" width=".8" height="3.600"/></g>
<path d="M55.500 470.200H84L80.500 477.700H58.500z" fill="#0a0a0a"/>
<path d="M84 470.200L80.500 477.700M110.200 470.800L107.200 477.500M139 470.800L136 477.500" stroke="#555" stroke-width=".7"/>
</svg>
<div class="t" style="left:61.200px;top:471.300px;font-size:6px;color:#fff;">Model</div>
<div class="t" style="left:84.800px;top:471.300px;font-size:5.700px;color:#222;">Layout1</div>
<div class="t" style="left:113.200px;top:471.300px;font-size:5.700px;color:#222;">Layout2</div>
<!-- RIGHT -->
<div id="rt">
<div class="a" style="left:792.800px;top:62.500px;width:7.200px;height:242px;background:#777;"></div>
<div class="a" style="left:792.500px;top:62.500px;width:1.500px;height:209px;background:#e0e0e0;"></div>
<div class="a" style="left:794px;top:62.500px;width:2.800px;height:209px;background:#6a6a6a;"></div>
<div class="a" style="left:796.800px;top:66px;width:3.200px;height:205.600px;background:#f4f4f4;"></div>
<div class="a" style="left:797.800px;top:71.5px;width:2.200px;height:2.200px;background:#333;"></div>
<div class="a" style="left:797.800px;top:80.5px;width:2.200px;height:2.200px;background:#444;"></div>
<div class="a" style="left:797.800px;top:84px;width:2.200px;height:2.200px;background:#333;"></div>
<div class="a" style="left:797.800px;top:88px;width:2.200px;height:2.200px;background:#444;"></div>
<div class="a" style="left:797.800px;top:103px;width:2.200px;height:2.200px;background:#c8a070;"></div>
<div class="a" style="left:797.800px;top:118px;width:2.200px;height:2.200px;background:#444;"></div>
<div class="a" style="left:797.800px;top:124px;width:2.200px;height:2.200px;background:#555;"></div>
<div class="a" style="left:797.800px;top:131px;width:2.200px;height:2.200px;background:#444;"></div>
<div class="a" style="left:797.800px;top:141px;width:2.200px;height:2.200px;background:#555;"></div>
<div class="a" style="left:797.800px;top:156px;width:2.200px;height:2.200px;background:#444;"></div>
<div class="a" style="left:797.800px;top:166px;width:2.200px;height:2.200px;background:#c8a070;"></div>
<div class="a" style="left:797.800px;top:176px;width:2.200px;height:2.200px;background:#555;"></div>
<div class="a" style="left:797.800px;top:186px;width:2.200px;height:2.200px;background:#666;"></div>
<div class="a" style="left:797.800px;top:208px;width:2.200px;height:2.200px;background:#555;"></div>
<div class="a" style="left:797.800px;top:214px;width:2.200px;height:2.200px;background:#c8a070;"></div>
<div class="a" style="left:797.800px;top:228px;width:2.200px;height:2.200px;background:#999;"></div>
<div class="a" style="left:797.800px;top:243px;width:2.200px;height:2.200px;background:#444;"></div>
<div class="a" style="left:797.800px;top:250px;width:2.200px;height:2.200px;background:#888;"></div>
<div class="a" style="left:797.800px;top:254px;width:2.200px;height:2.200px;background:#999;"></div>
<div class="a" style="left:797.800px;top:265px;width:2.200px;height:2.200px;background:#903050;"></div>
<div class="a" style="left:788.300px;top:304.200px;width:10px;height:178px;background:linear-gradient(90deg,#d0d0d0,#c2c2c2);"></div>
<div class="a" style="left:798.300px;top:304.200px;width:1.700px;height:178px;background:#8a8a8a;"></div>
<div class="t" style="left:791px;top:467.500px;font-size:6px;color:#222;transform-origin:0 0;transform:rotate(-90deg);-webkit-text-stroke:.05px;">Tool Palettes - All Palettes</div>
<svg class="a" style="left:0;top:0" width="800" height="493" viewBox="0 0 800 493"><path d="M792 307.300l4.400 4.600M796.400 307.300l-4.400 4.600" stroke="#111" stroke-width="1.300"/><rect x="791.300" y="316.500" width="5.800" height="5.600" fill="#222"/><path d="M795.800 317.800l-2.300 1.600 2.300 1.600z" fill="#ddd"/><rect x="791.300" y="326.300" width="5.800" height="5.600" fill="#222"/><path d="M792.300 329h1.500v2h-1.500zM794.600 329h1.800" stroke="#ddd" stroke-width=".6" fill="none"/><rect x="791" y="473.500" width="5.500" height="6.500" fill="#f0f0f0" stroke="#666" stroke-width=".7"/><path d="M791 475.500h5.500" stroke="#666" stroke-width=".6"/><rect x="712" y="479.500" width="25.500" height="9.700" fill="#a4a4a4"/><rect x="738.500" y="479.500" width="10.500" height="9.700" fill="#a4a4a4"/><rect x="750" y="479.500" width="10.500" height="9.700" fill="#a0a0a0"/><rect x="761.300" y="479.500" width="26.200" height="9.700" fill="#6c6c6c"/><path d="M716.5 481.2l1.100 3.300 2.400 2.500-1 .8-2.500-1.600-2.500 1.600-1-.8 2.400-2.500z" fill="#f0f0f0" stroke="#666" stroke-width=".5"/><path d="M742.5 481.2l1.100 3.300 2.400 2.500-1 .8-2.500-1.600-2.500 1.600-1-.8 2.400-2.500z" fill="#f0f0f0" stroke="#777" stroke-width=".5"/><circle cx="745.500" cy="485.500" r="1.500" fill="#f0d060"/><path d="M754.5 481.2l1.100 3.300 2.400 2.500-1 .8-2.500-1.600-2.500 1.600-1-.8 2.400-2.500z" fill="#d8d8d8" stroke="#999" stroke-width=".5"/><rect x="763.800" y="481" width="7" height="4" fill="#4a78c8"/><path d="M764 487c2 1.500 5 1.500 7.500-1" stroke="#60c040" stroke-width="1.300" fill="none"/><rect x="765.500" y="481.800" width="2.500" height="2" fill="#e8f0ff"/><circle cx="778" cy="483.500" r="2.400" fill="#fdf6c0" stroke="#c8b860" stroke-width=".5"/><rect x="777" y="486" width="2" height="1.800" fill="#ddd"/><path d="M729.500 483.200h3.400l-1.700 2.400z" fill="#111"/><path d="M789 483.500h3.600l-1.800 2.600z" fill="#111"/></svg>
<div class="t" style="left:721.500px;top:481.300px;font-size:6.300px;color:#f4f4f4;text-shadow:0 0 1px #555;">1:1</div>
</div>
<!-- /RIGHT -->
<!-- PALETTE -->
<div id="pal">
<div class="a" style="left:279.600px;top:240.600px;width:470.400px;height:154.400px;background:#ebebeb;box-shadow:0 0 0 .7px #3a3a3a;"></div>
<div class="a" style="left:280.300px;top:241.200px;width:458px;height:.8px;background:#fafafa;"></div>
<div class="a" style="left:738.500px;top:240.600px;width:11.500px;height:154.400px;background:linear-gradient(90deg,#d4d4d4,#bcbcbc);"></div>
<div class="t" style="left:283px;top:247.800px;font-size:6px;color:#222;">Current layer: 0</div>
<div class="a" style="left:674px;top:246.600px;width:63px;height:9px;background:#fff;"></div>
<div class="t" style="left:675.600px;top:248.200px;font-size:6px;color:#7a7a7a;">Search for layer</div>
<div class="a" style="left:280.500px;top:378px;width:458px;height:16.500px;background:#f3f3f3;border-top:.7px solid #fafafa;"></div>
<div class="t" style="left:283.800px;top:383.700px;font-size:6px;color:#222;">All: 2 layers displayed of 2 total layers</div>
<div class="a" style="left:281.800px;top:271.500px;width:61.400px;height:104.500px;background:#fff;box-shadow:0 0 0 .7px #9a9a9a;"></div>
<div class="a" style="left:281.800px;top:271.500px;width:61.400px;height:10.500px;background:#f0f0f0;border-bottom:.7px solid #c8c8c8;box-sizing:border-box;"></div>
<div class="t" style="left:296px;top:274px;font-size:6px;color:#222;">Filters</div>
<div class="t" style="left:306.200px;top:284.600px;font-size:6px;color:#222;">All</div>
<div class="t" style="left:315.800px;top:293px;font-size:6px;color:#222;">All Used L</div>
<div class="a" style="left:281.800px;top:356px;width:61.400px;height:9.700px;background:#f1f1f1;"></div>
<div class="a" style="left:281.800px;top:366.500px;width:61.400px;height:9.500px;background:#f0f0f0;border-top:.7px solid #c8c8c8;box-sizing:border-box;"></div>
<div class="a" style="left:285.300px;top:368.300px;width:6px;height:6px;box-sizing:border-box;border:.7px solid #8e8f8f;background:linear-gradient(135deg,#dcdcdc,#fff);"></div>
<div class="t" style="left:293.600px;top:368.500px;font-size:6.200px;color:#222;">Invert filter</div>
<div class="a" style="left:345.300px;top:271.300px;width:391.400px;height:104.700px;background:#fff;box-shadow:0 0 0 .8px #4a4a4a;"></div>
<div class="a" style="left:345.300px;top:271.300px;width:391.400px;height:11.700px;background:linear-gradient(180deg,#fff,#f4f4f6);border-bottom:.7px solid #d4d4d8;box-sizing:border-box;"></div>
<div class="a" style="left:345.300px;top:292.600px;width:391.400px;height:9.600px;background:#e3e3e3;"></div>
<div class="a" style="left:440.200px;top:271.300px;width:1.600px;height:104.700px;background:#a6a6a6;"></div>
<div class="a" style="left:345.300px;top:367.700px;width:391.400px;height:8.300px;background:#f1f1f1;"></div>
<div class="t" style="left:350.6px;top:274.800px;font-size:6px;color:#222;">S...</div>
<div class="t" style="left:364px;top:274.800px;font-size:6px;color:#222;">Name</div>
<div class="t" style="left:445.2px;top:274.800px;font-size:6px;color:#222;">O..</div>
<div class="t" style="left:457.5px;top:274.800px;font-size:6px;color:#222;">Fre...</div>
<div class="t" style="left:478.5px;top:274.800px;font-size:6px;color:#222;">L...</div>
<div class="t" style="left:494.2px;top:274.800px;font-size:6px;color:#222;">Color</div>
<div class="t" style="left:538.7px;top:274.800px;font-size:6px;color:#222;">Linetype</div>
<div class="t" style="left:571.7px;top:274.800px;font-size:6px;color:#222;">Linewei...</div>
<div class="t" style="left:606px;top:274.800px;font-size:6px;color:#222;">Trans...</div>
<div class="t" style="left:633.6px;top:274.800px;font-size:6px;color:#222;">Plot S...</div>
<div class="t" style="left:661px;top:274.800px;font-size:6px;color:#222;">P...</div>
<div class="t" style="left:674px;top:274.800px;font-size:6px;color:#222;">New ...</div>
<div class="t" style="left:700.6px;top:274.800px;font-size:6px;color:#222;">Description</div>
<div class="t" style="left:362.5px;top:285.2px;font-size:6px;color:#222;">0</div>
<div class="t" style="left:501.5px;top:285.2px;font-size:6px;color:#222;">white</div>
<div class="t" style="left:537.2px;top:285.2px;font-size:6px;color:#222;">Continu...</div>
<div class="t" style="left:583.2px;top:285.2px;font-size:6px;color:#222;">Defa...</div>
<div class="t" style="left:604.5px;top:285.2px;font-size:6px;color:#222;">0</div>
<div class="t" style="left:632px;top:285.2px;font-size:6px;color:#9a9a9a;">Color_7</div>
<div class="t" style="left:362.5px;top:294.5px;font-size:6px;color:#222;">L-PAT-IREG</div>
<div class="t" style="left:501.5px;top:294.5px;font-size:6px;color:#222;">11</div>
<div class="t" style="left:537.2px;top:294.5px;font-size:6px;color:#222;">Continu...</div>
<div class="t" style="left:583.2px;top:294.5px;font-size:6px;color:#222;">Defa...</div>
<div class="t" style="left:604.5px;top:294.5px;font-size:6px;color:#222;">0</div>
<div class="t" style="left:632px;top:294.5px;font-size:6px;color:#9a9a9a;">Color_...</div>
<div class="t" style="left:742px;top:381.500px;font-size:6px;color:#222;transform-origin:0 0;transform:rotate(-90deg);-webkit-text-stroke:.05px;">Layer Properties Manager</div>
<svg class="a" style="left:0;top:0" width="800" height="493" viewBox="0 0 800 493"><path d="M742.300 243.500l4.400 4.600M746.700 243.500l-4.400 4.600" stroke="#111" stroke-width="1.300"/><path d="M741.500 255.200h2.500M746.300 252.500v5.500M744.300 253.500v3.500" stroke="#111" stroke-width="1.100"/><path d="M741.300 255.200l1.800-1.500v3z" fill="#111"/><rect x="741.800" y="262.300" width="5.800" height="5.400" fill="#222"/><path d="M742.800 264.800h1.500v2h-1.500zM745 264.800h1.800" stroke="#ddd" stroke-width=".6" fill="none"/><path d="M741.500 387.500l3-1 3 1v6l-3 1-3-1z" fill="#f4f4f4" stroke="#777" stroke-width=".6"/><path d="M742.500 388.500l2 .7 2-.7M742.500 390.500l2 .7 2-.7" stroke="#999" stroke-width=".5" fill="none"/><circle cx="731.200" cy="250.300" r="2" fill="none" stroke="#555" stroke-width=".8"/><path d="M732.700 251.800l2.300 2.300" stroke="#555" stroke-width="1"/><path d="M714.800 262.300a3 3 0 0 1 5.200-1.300M720.800 264a3 3 0 0 1-5.200 1.300" fill="none" stroke="#3a9a40" stroke-width="1.400"/><path d="M721.300 259.300v2.900h-2.900zM714.300 267v-2.900h2.900z" fill="#3a9a40"/><path d="M726 266.500l3.500-3.500" stroke="#999" stroke-width="1.500"/><circle cx="730.800" cy="261.500" r="2" fill="#c8c8c8" stroke="#999" stroke-width=".6"/><rect x="730.800" y="259" width="2" height="2" fill="#ebebeb"/><path d="M298 260h5v3h1.500l-3.500 4-3.500-4h.5z" fill="#e8eef4" stroke="#556" stroke-width=".7"/><path d="M307.400 258.500v9" stroke="#c0c0c0" stroke-width=".7"/><path d="M312.500 262.500h7v4.500h-7zM314.500 262.500v-2h3v2" fill="#f0f0f0" stroke="#556" stroke-width=".8"/><path d="M314.500 264.500h3" stroke="#556" stroke-width=".7"/><path d="M345 265.500l5-2.500 3 .5-4.500 3z" fill="#8ab8e8" stroke="#3a78c0" stroke-width=".6"/><circle cx="348" cy="260.800" r="1.500" fill="#f0a030"/><circle cx="358.300" cy="260.800" r="1.500" fill="#f0a030"/><rect x="360" y="262.500" width="4.500" height="4" fill="#d8ecfa" stroke="#3a88c8" stroke-width=".7"/><path d="M360 264h4.500" stroke="#3a88c8" stroke-width=".6"/><path d="M369.500 259.500l6 7M375.500 259.500l-6 7" stroke="#c8484c" stroke-width="1.700"/><path d="M381 263.500l2.800 2.800 4.700-6.800" fill="none" stroke="#4a9a3a" stroke-width="1.700"/><rect x="288" y="285.500" width="4" height="4" fill="#fff" stroke="#888" stroke-width=".6"/><path d="M289 287.500h2" stroke="#333" stroke-width=".6"/><path d="M292 287.500h3M300.500 291v5h5" stroke="#999" stroke-width=".5" fill="none"/><path d="M295.500 288.500l3-3h5l-3 3zM295.500 290.500l3-3h5l-3 3z" fill="#e8e8e8" stroke="#667" stroke-width=".6"/><path d="M306 295.500l2.500-2.500h4.500l-2.500 2.500z" fill="#e8e8e8" stroke="#667" stroke-width=".6"/><path d="M308 296l2 2.500 2.500-2.500z" fill="#c8d0d8" stroke="#556" stroke-width=".5"/><path d="M338 274.5l-2.300 2.300 2.300 2.300M341.300 274.5l-2.300 2.300 2.300 2.300" fill="none" stroke="#222" stroke-width=".9"/><path d="M338 369.0l-2.300 2.300 2.300 2.300M341.300 369.0l-2.300 2.300 2.300 2.300" fill="none" stroke="#222" stroke-width=".9"/><path d="M289 359.200l-1.800 1.600 1.800 1.600zM336.500 359.200l1.800 1.600-1.800 1.600z" fill="#444"/><rect x="293.300" y="356.800" width="31" height="8.200" rx="1" fill="#dcdcdc" stroke="#a0a0a0" stroke-width=".6"/><path d="M307.600 359.200v3.200M308.800 359.200v3.200M310 359.200v3.200" stroke="#777" stroke-width=".5"/><rect x="354.800" y="368.200" width="366" height="7.300" rx="1" fill="#dcdcdc" stroke="#a8a8a8" stroke-width=".6"/><path d="M350.500 370.300l-1.800 1.600 1.800 1.600zM731.500 370.300l1.800 1.600-1.800 1.600z" fill="#555"/><path d="M536.800 370.300v3.200M538 370.300v3.200M539.200 370.300v3.200" stroke="#777" stroke-width=".5"/><path d="M435.500 279l1.800-2.200 1.800 2.200z" fill="#999"/><path d="M347 288l2.500 2.500 4-5.500" fill="none" stroke="#5a9a48" stroke-width="1.500"/><path d="M347 299l3-3.500h5l-3 3.500z" fill="#d8e8f8" stroke="#7098c8" stroke-width=".6"/><circle cx="448.200" cy="287.0" r="2.200" fill="#fffdf0" stroke="#a8a488" stroke-width=".55"/><rect x="447.200" y="289.4" width="2" height="2.200" fill="#b8b8b8" stroke="#888" stroke-width=".4"/><circle cx="464.200" cy="288.2" r="1.900" fill="#fff8d8" stroke="#9a9068" stroke-width=".55"/><path d="M464.200 284.4v1.200M464.200 290.8v1.200M460.400 288.2h1.200M466.800 288.2h1.200M461.500 285.5l.9 .9M466 290.0l.9 .9M466.900 285.5l-.9 .9M462.400 290.0l-.9 .9" stroke="#a09878" stroke-width=".55"/><rect x="478.600" y="287.7" width="4.200" height="3.800" fill="#cce4f4" stroke="#2a78a8" stroke-width=".8"/><path d="M482.300 287.7v-1.500c0-1.700 2.600-1.700 2.600 0" fill="none" stroke="#2a78a8" stroke-width=".8"/><path d="M568.200 288.5h10.500" stroke="#222" stroke-width=".9"/><ellipse cx="663.500" cy="288.5" rx="4" ry="2.600" fill="#f0f0f0" stroke="#556" stroke-width=".7"/><rect x="661.300" y="284.9" width="4.400" height="2.800" fill="#fff" stroke="#556" stroke-width=".6"/><path d="M661 289.5h5" stroke="#556" stroke-width=".7"/><rect x="680.300" y="285.0" width="3.600" height="5" fill="#e8e8e8" stroke="#777" stroke-width=".6"/><circle cx="685" cy="289.7" r="1.900" fill="#f8c030" stroke="#c89020" stroke-width=".5"/><circle cx="448.200" cy="296.3" r="2.200" fill="#fffdf0" stroke="#a8a488" stroke-width=".55"/><rect x="447.200" y="298.7" width="2" height="2.200" fill="#b8b8b8" stroke="#888" stroke-width=".4"/><circle cx="464.200" cy="297.5" r="1.900" fill="#fff8d8" stroke="#9a9068" stroke-width=".55"/><path d="M464.200 293.7v1.200M464.200 300.1v1.200M460.400 297.5h1.200M466.800 297.5h1.200M461.500 294.8l.9 .9M466 299.3l.9 .9M466.900 294.8l-.9 .9M462.400 299.3l-.9 .9" stroke="#a09878" stroke-width=".55"/><rect x="478.600" y="297.0" width="4.200" height="3.800" fill="#cce4f4" stroke="#2a78a8" stroke-width=".8"/><path d="M482.300 297.0v-1.500c0-1.700 2.600-1.700 2.600 0" fill="none" stroke="#2a78a8" stroke-width=".8"/><path d="M568.200 297.5h10.500" stroke="#222" stroke-width=".9"/><ellipse cx="663.500" cy="297.8" rx="4" ry="2.600" fill="#f0f0f0" stroke="#556" stroke-width=".7"/><rect x="661.300" y="294.2" width="4.400" height="2.800" fill="#fff" stroke="#556" stroke-width=".6"/><path d="M661 298.8h5" stroke="#556" stroke-width=".7"/><rect x="680.300" y="294.3" width="3.600" height="5" fill="#e8e8e8" stroke="#777" stroke-width=".6"/><circle cx="685" cy="299.0" r="1.900" fill="#f8c030" stroke="#c89020" stroke-width=".5"/><rect x="491.500" y="285.800" width="5.800" height="5.300" fill="#fff" stroke="#333" stroke-width=".8"/><rect x="491.500" y="295.100" width="5.800" height="5.300" fill="#f47c7c" stroke="#a03030" stroke-width=".8"/></svg>
</div>
<!-- /PALETTE -->
<!-- DIALOG -->
<div id="dlg">
<div class="a" style="left:74.200px;top:131px;width:223px;height:148.200px;background:rgba(60,30,30,.13);border-radius:3px;box-shadow:0 0 0 .9px rgba(128,128,128,.95), 0 0 3px 1px rgba(0,0,0,.55);"></div>
<div class="a" style="left:293px;top:241px;width:4.200px;height:38px;background:#d9d0d0;"></div>
<div class="a" style="left:280.300px;top:275.400px;width:16.900px;height:3.800px;background:#d9d0d0;border-radius:0 0 3px 0;"></div>
<div class="a" style="left:88px;top:134.500px;width:42px;height:8px;background:#9a9a9a;border-radius:4px;filter:blur(2.500px);"></div>
<svg class="a" style="left:78px;top:134.300px" width="8" height="8" viewBox="0 0 8 8"><rect x=".3" y="1.500" width="7.400" height="6.200" fill="#f4f4f4" stroke="#999" stroke-width=".5"/><path d="M2.500 0h3v3h-3z" fill="#c8282a"/><path d="M.8 2.500h3v4.500h-3z" fill="#d23a3a"/><path d="M4.500 4l2.500 0v3h-2.500z" fill="#c8c8d0"/><path d="M1.500 6l2-2.500" stroke="#fff" stroke-width=".7"/></svg>
<div class="t" style="left:89px;top:136px;font-size:6px;color:#161616;">Select Linetype</div>
<div class="a" style="left:269px;top:131px;width:25px;height:10px;box-sizing:border-box;background:linear-gradient(180deg,#3a3a3a,#141414 50%,#0c0c0c);border:.8px solid #5a5a5a;border-top:0;border-radius:0 0 2.500px 2.500px;"></div>
<svg class="a" style="left:279.700px;top:133.200px" width="6" height="6" viewBox="0 0 6 6"><path d="M1 1L5 5M5 1L1 5" stroke="#fff" stroke-width="1.400"/></svg>
<div class="a" style="left:77.700px;top:145.700px;width:215.700px;height:129.800px;background:#f0f0f0;"></div>
<div class="t" style="left:82.200px;top:156.200px;font-size:5.300px;color:#111;">Loaded linetypes</div>
<div class="a" style="left:81.400px;top:163.800px;width:207px;height:89.700px;background:#fff;box-shadow:0 0 0 .7px #b4b8c0;"></div>
<div class="a" style="left:81.400px;top:163.800px;width:198.200px;height:11.400px;background:linear-gradient(180deg,#fff,#f4f5f7);border-bottom:.7px solid #d8dbe0;box-sizing:border-box;"></div>
<div class="a" style="left:159.500px;top:164.500px;width:.6px;height:10px;background:#eceef0;"></div>
<div class="a" style="left:209.500px;top:164.500px;width:.6px;height:10px;background:#eceef0;"></div>
<div class="t" style="left:86px;top:167.600px;font-size:5.300px;color:#222;">Linetype</div>
<div class="t" style="left:162.5px;top:167.600px;font-size:5.300px;color:#222;">Appearance</div>
<div class="t" style="left:213.8px;top:167.600px;font-size:5.300px;color:#222;">Description</div>
<div class="t" style="left:82.500px;top:178.8px;font-size:5.300px;color:#111;">x_CF_4650LH<span style="letter-spacing:.9px">..</span></div>
<div class="t" style="left:121.700px;top:178.8px;font-size:5.300px;color:#111;white-space:pre;">$( Cable   Tele</div>
<div class="t" style="left:211.200px;top:178.8px;font-size:5.300px;color:#111;">( Cable / Tele )</div>
<div class="t" style="left:82.500px;top:188.8px;font-size:5.300px;color:#111;">x_CF_4650LH<span style="letter-spacing:.9px">..</span></div>
<div class="t" style="left:121.700px;top:188.8px;font-size:5.300px;color:#111;white-space:pre;">lan$0$HIDDEN</div>
<div class="t" style="left:211.200px;top:188.8px;font-size:5.300px;color:#111;">Hidden</div>
<div class="t" style="left:82.500px;top:197.8px;font-size:5.300px;color:#111;">x_CF_4650LH<span style="letter-spacing:.9px">..</span></div>
<div class="t" style="left:121.700px;top:197.8px;font-size:5.300px;color:#111;white-space:pre;">n Double-Dash</div>
<div class="t" style="left:211.200px;top:197.8px;font-size:5.300px;color:#111;">( Chain Double-Dash )</div>
<div class="t" style="left:82.500px;top:207.8px;font-size:5.300px;color:#111;">x_CF_4650LH<span style="letter-spacing:.9px">..</span></div>
<div class="t" style="left:121.700px;top:207.8px;font-size:5.300px;color:#111;white-space:pre;">$( Wide Dash )</div>
<div class="t" style="left:211.200px;top:207.8px;font-size:5.300px;color:#111;">( Wide Dash )</div>
<div class="t" style="left:82.500px;top:217.8px;font-size:5.300px;color:#111;">x_CF_4650LH<span style="letter-spacing:.9px">..</span></div>
<div class="t" style="left:121.700px;top:217.8px;font-size:5.300px;color:#111;white-space:pre;">Tapered Dash )</div>
<div class="t" style="left:211.200px;top:217.8px;font-size:5.300px;color:#111;">( Tapered Dash )</div>
<div class="t" style="left:82.500px;top:226.8px;font-size:5.300px;color:#111;">x_CF_4650LH<span style="letter-spacing:.9px">..</span></div>
<div class="t" style="left:121.700px;top:226.8px;font-size:5.300px;color:#111;white-space:pre;">$( Leader Line)</div>
<div class="t" style="left:211.200px;top:226.8px;font-size:5.300px;color:#111;">( Leader Line)</div>
<div class="t" style="left:82.500px;top:236.8px;font-size:5.300px;color:#111;">x_CF_4650LH<span style="letter-spacing:.9px">..</span></div>
<div class="t" style="left:121.700px;top:236.8px;font-size:5.300px;color:#111;white-space:pre;">an$0$( Curtain</div>
<div class="t" style="left:211.200px;top:236.8px;font-size:5.300px;color:#111;">( Curtain )</div>
<svg class="a" style="left:0;top:0" width="800" height="493" viewBox="0 0 800 493"><path d="M163 181.500H205" stroke="#444" stroke-width=".8"/><path d="M163 191.500H206" stroke="#222" stroke-width=".9" stroke-dasharray="3.200 1.600"/><path d="M229 194H279" stroke="#444" stroke-width=".8" stroke-dasharray="5.500 2.500"/><path d="M163 200.500H206" stroke="#222" stroke-width=".9" stroke-dasharray="6.500 1.300 1.600 1.300 1.600 1.300"/><path d="M163 210.500H181" stroke="#333" stroke-width=".8"/><rect x="191" y="208.400" width="14.500" height="3.800" fill="#000"/><path d="M163 220H206" stroke="#333" stroke-width=".8" stroke-dasharray="1.600 1.300"/><path d="M163 217.800v4.400l6.500-2.200zM178.500 217.800v4.400l6.500-2.200zM194 217.800v4.400l6.500-2.200z" fill="#000"/><path d="M163 229.500H206" stroke="#222" stroke-width=".9"/><rect x="163.300" y="227.500" width="2.400" height="2.800" fill="#fff" stroke="#111" stroke-width=".7"/><rect x="194.300" y="227.800" width="2.600" height="2.800" fill="#fff" stroke="#111" stroke-width=".7"/><path d="M163 235.800H206" stroke="#000" stroke-width="1.100"/><rect x="163.400" y="237.800" width="2.200" height="2.800" fill="#fff" stroke="#111" stroke-width=".7"/><rect x="201.800" y="237" width="1.300" height="4" fill="#222"/><rect x="279.600" y="163.800" width="8.800" height="81" fill="#f1f1f1"/><path d="M282.200 170.200l1.700-2.200 1.700 2.200z" fill="#444"/><path d="M282.200 239l1.700 2.200 1.700-2.200z" fill="#444"/><rect x="280.200" y="201" width="7.400" height="7.200" rx="1" fill="#e4e4e4" stroke="#9a9a9a" stroke-width=".6"/><rect x="81.400" y="244.700" width="207" height="8.800" fill="#f1f1f1"/><rect x="92.200" y="245.300" width="136" height="7.600" rx="1" fill="#dcdcdc" stroke="#a0a0a0" stroke-width=".6"/><path d="M87.500 247.500l-2 1.600 2 1.600zM272 247.500l2 1.600-2 1.600z" fill="#444"/><path d="M159 247.500v3.200M160.200 247.500v3.200M161.400 247.500v3.200" stroke="#777" stroke-width=".5"/></svg>
<div class="a" style="left:97px;top:258.300px;width:37.600px;height:10.900px;box-sizing:border-box;border:.8px solid #8e8e8e;border-radius:1.500px;background:linear-gradient(180deg,#f6f6f6 0,#ececec 48%,#dadada 52%,#d2d2d2 100%);text-align:center;font-size:5.300px;line-height:9.500px;color:#111;">OK</div>
<div class="a" style="left:143.3px;top:258.300px;width:37.600px;height:10.900px;box-sizing:border-box;border:.8px solid #8e8e8e;border-radius:1.500px;background:linear-gradient(180deg,#f6f6f6 0,#ececec 48%,#dadada 52%,#d2d2d2 100%);text-align:center;font-size:5.300px;line-height:9.500px;color:#111;">Cancel</div>
<div class="a" style="left:189.3px;top:258.300px;width:37.600px;height:10.900px;box-sizing:border-box;border:.8px solid #8e8e8e;border-radius:1.500px;background:linear-gradient(180deg,#f6f6f6 0,#ececec 48%,#dadada 52%,#d2d2d2 100%);text-align:center;font-size:5.300px;line-height:9.500px;color:#111;">Load...</div>
<div class="a" style="left:235.2px;top:258.300px;width:37.600px;height:10.900px;box-sizing:border-box;border:.8px solid #8e8e8e;border-radius:1.500px;background:linear-gradient(180deg,#f6f6f6 0,#ececec 48%,#dadada 52%,#d2d2d2 100%);text-align:center;font-size:5.300px;line-height:9.500px;color:#111;">Help</div>
</div>
<!-- /DIALOG -->
</div>
</body></html>
